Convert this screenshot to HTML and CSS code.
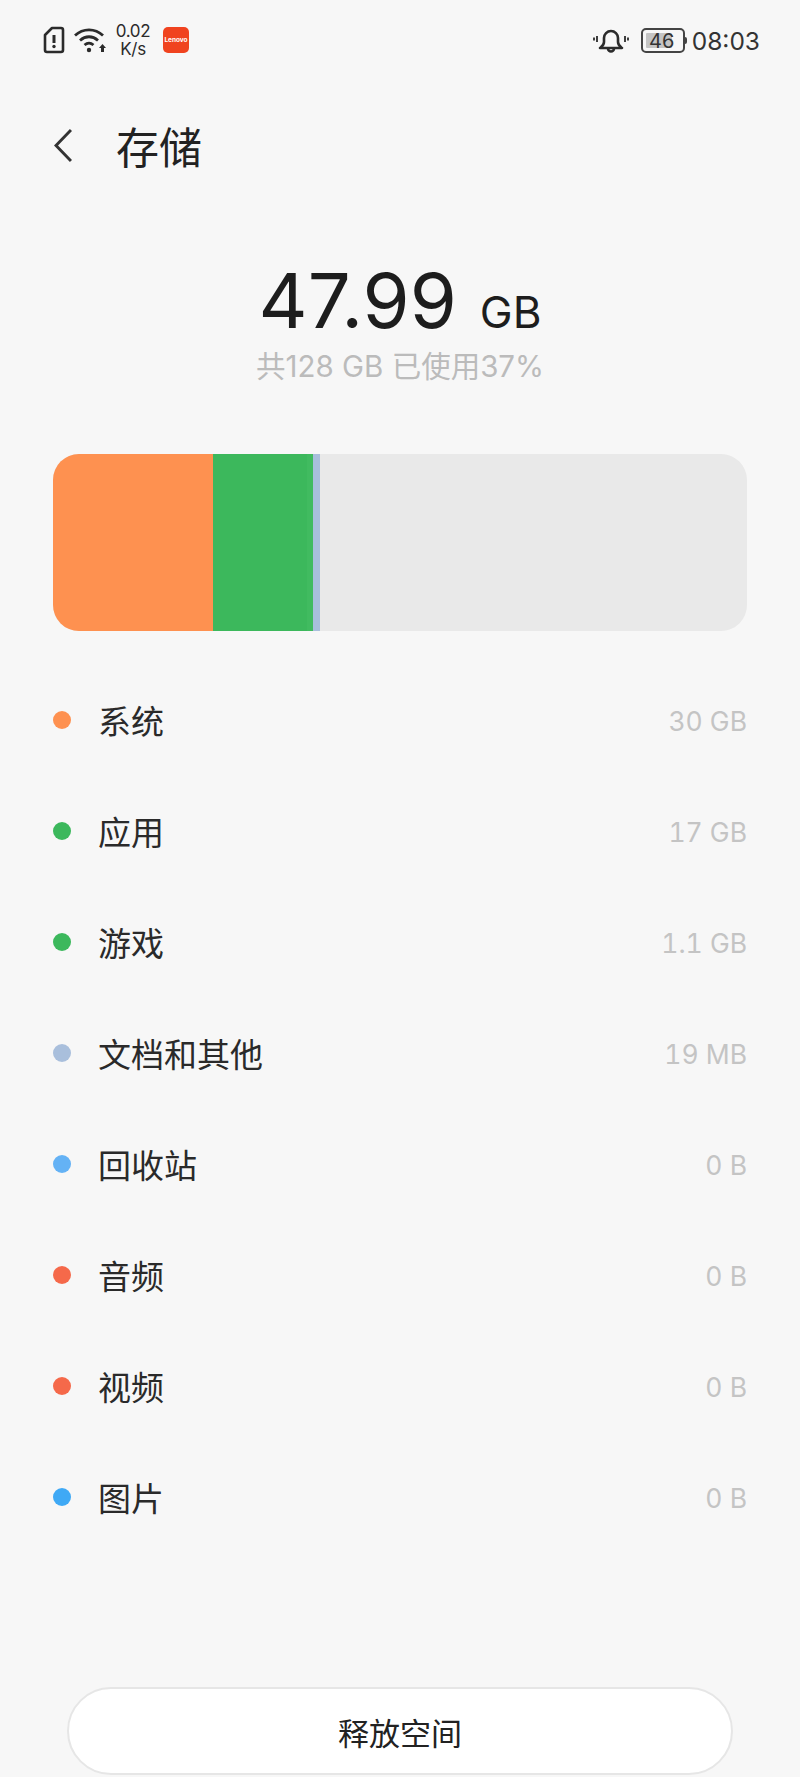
FILE: index.html
```html
<!DOCTYPE html>
<html lang="zh">
<head>
<meta charset="utf-8">
<title>存储</title>
<link rel="stylesheet" href="styles.css">
</head>
<body>
<div class="screen">
  <header class="status">
    <div class="status-left">
      <svg class="ic-sim" viewBox="0 0 22 28" width="22" height="28"><path d="M9 2h9a2 2 0 0 1 2 2v20a2 2 0 0 1-2 2H4a2 2 0 0 1-2-2V9z" fill="none" stroke="#2b2b2b" stroke-width="2.6" stroke-linejoin="round"/><path d="M11 9v8" stroke="#2b2b2b" stroke-width="3"/><circle cx="11" cy="20.5" r="1.700" fill="#2b2b2b"/></svg>
      <svg class="ic-wifi" viewBox="0 0 32 26" width="32" height="26"><g fill="none" stroke="#2b2b2b" stroke-width="2.800"><path d="M1 8.500c8-7.500 20-7.500 28 0"/><path d="M6 13.500c5.500-5 12.500-5 18 0"/><path d="M10.500 18c3-2.500 6-2.500 9 0"/></g><circle cx="15" cy="23" r="2.200" fill="#2b2b2b"/><path d="M28.500 17l-3.500 4h2v4h3v-4h2z" fill="#2b2b2b"/></svg>
      <div class="speed"><span>0.02</span><span>K/s</span></div>
      <div class="app-badge"><span>Lenovo</span></div>
    </div>
    <div class="status-right">
      <svg class="ic-bell" viewBox="0 0 36 28" width="36" height="28"><g fill="none" stroke="#2b2b2b" stroke-width="2.600" stroke-linejoin="round"><path d="M7 22c2.500-2 4-3 4-6v-4a7 7 0 0 1 14 0v4c0 3 1.500 4 4 6z"/><path d="M15 22.500a3 3 0 0 0 6 0"/></g><path d="M4 10v6M1 11.500v3M32 10v6M35 11.500v3" stroke="#2b2b2b" stroke-width="1.800"/></svg>
      <div class="battery">
        <div class="battery-body"><div class="battery-fill"></div><span>46</span></div>
        <div class="battery-cap"></div>
      </div>
      <div class="clock">08:03</div>
    </div>
  </header>

  <nav class="titlebar">
    <svg class="ic-back" viewBox="0 0 18 35" width="18" height="35"><path d="M17 2L2 17.500 17 33" fill="none" stroke="#333" stroke-width="3"/></svg>
    <h1>存储</h1>
  </nav>

  <section class="summary">
    <div class="used"><span class="used-num">47.99</span><span class="used-unit">GB</span></div>
    <div class="total">共128 GB 已使用37%</div>
  </section>

  <div class="bar">
    <div class="seg seg-system"></div>
    <div class="seg seg-apps"></div>
    <div class="seg seg-games"></div>
    <div class="seg seg-docs"></div>
  </div>

  <ul class="list">
    <li class="row"><i class="dot c-orange"></i><span class="name">系统</span><span class="size">30 GB</span></li>
    <li class="row"><i class="dot c-green"></i><span class="name">应用</span><span class="size">17 GB</span></li>
    <li class="row"><i class="dot c-green"></i><span class="name">游戏</span><span class="size">1.1 GB</span></li>
    <li class="row"><i class="dot c-slate"></i><span class="name">文档和其他</span><span class="size">19 MB</span></li>
    <li class="row"><i class="dot c-sky"></i><span class="name">回收站</span><span class="size">0 B</span></li>
    <li class="row"><i class="dot c-coral"></i><span class="name">音频</span><span class="size">0 B</span></li>
    <li class="row"><i class="dot c-coral"></i><span class="name">视频</span><span class="size">0 B</span></li>
    <li class="row"><i class="dot c-blue"></i><span class="name">图片</span><span class="size">0 B</span></li>
  </ul>

  <button class="free">释放空间</button>
</div>
</body>
</html>
```
FILE: styles.css
```css
* { box-sizing: border-box; }
html, body { margin: 0; padding: 0; }
body {
  background: #f7f7f7;
  font-family: "Inter", "Noto Sans CJK SC", sans-serif;
  color: #222;
}
.screen {
  width: 800px;
  height: 1777px;
  display: flex;
  flex-direction: column;
  overflow: hidden;
}

/* status bar */
.status {
  height: 80px;
  padding: 0 40px 0 43px;
  display: flex;
  align-items: center;
  justify-content: space-between;
}
.status-left, .status-right { display: flex; align-items: center; }
.ic-sim { margin-right: 9px; }
.ic-wifi { margin-right: 8px; }
.speed {
  width: 38px;
  margin-right: 11px;
  display: flex;
  flex-direction: column;
  align-items: center;
  font-size: 17px;
  line-height: 18px;
  letter-spacing: -.3px;
  color: #2b2b2b;
}
.app-badge {
  width: 26px;
  height: 26px;
  border-radius: 5px;
  background: #f0431f;
  display: flex;
  align-items: center;
  justify-content: center;
}
.app-badge span { font-size: 6.500px; color: #fff; font-weight: 700; }
.ic-bell { margin-right: 12px; }
.battery { display: flex; align-items: center; margin-right: 5px; }
.battery-body {
  position: relative;
  width: 44px;
  height: 25px;
  border: 2px solid #444;
  border-radius: 5px;
  padding: 3px;
  display: flex;
}
.battery-fill { width: 26px; background: #c4c4c4; border-radius: 1px; }
.battery-body span {
  position: absolute;
  inset: 0 2px 0 0;
  text-align: center;
  font-size: 20px;
  line-height: 22px;
  color: #333;
}
.battery-cap {
  width: 2px;
  height: 7px;
  background: #444;
  border-radius: 0 2px 2px 0;
}
.clock { font-size: 24.500px; line-height: 32px; padding-top: 2px; color: #333; }

/* title */
.titlebar {
  height: 68px;
  margin-top: 31px;
  padding-left: 54px;
  display: flex;
  align-items: center;
}
.titlebar h1 {
  margin: 0 0 0 44px;
  font-size: 43px;
  font-weight: 400;
  color: #222;
}

/* used-space summary */
.summary {
  margin-top: 86px;
  text-align: center;
}
.used { height: 70px; line-height: 70px; color: #1d1d1d; }
.used-num { font-size: 76px; }
.used-unit { font-size: 44px; margin-left: 23px; }
.total {
  margin-top: 13px;
  font-size: 29.500px;
  line-height: 36px;
  color: #bbb;
}

/* capacity bar */
.bar {
  margin: 70px 53px 0;
  height: 177px;
  border-radius: 26px;
  background: #e9e9e9;
  display: flex;
  overflow: hidden;
}
.seg { height: 100%; }
.seg-system { width: 160px; background: #fe9150; }
.seg-apps { width: 94px; background: #3cb85c; }
.seg-games { width: 6px; background: #41bb60; }
.seg-docs { width: 7px; background: #a9bfdc; }

/* category rows */
.list {
  list-style: none;
  margin: 33px 53px 0;
  padding: 0;
}
.row {
  height: 111.100px;
  display: flex;
  align-items: center;
}
.dot {
  width: 18px;
  height: 18px;
  border-radius: 50%;
  margin-right: 27px;
}
.c-orange { background: #fe9150; }
.c-green { background: #3cb85c; }
.c-slate { background: #a9bfdc; }
.c-sky { background: #64b2f5; }
.c-coral { background: #f5694a; }
.c-blue { background: #3fa9f5; }
.name { flex: 1; font-size: 33px; color: #2a2a2a; }
.size {
  font-size: 26.500px;
  padding-top: 2px;
  color: #c4c4c4;
  font-variant-numeric: tabular-nums;
}

/* action */
.free {
  margin: auto 67px 2px;
  height: 88px;
  flex: none;
  border: 2px solid #e6e6e6;
  border-radius: 44px;
  background: #fff;
  font-family: inherit;
  font-size: 31px;
  color: #222;
}
```
